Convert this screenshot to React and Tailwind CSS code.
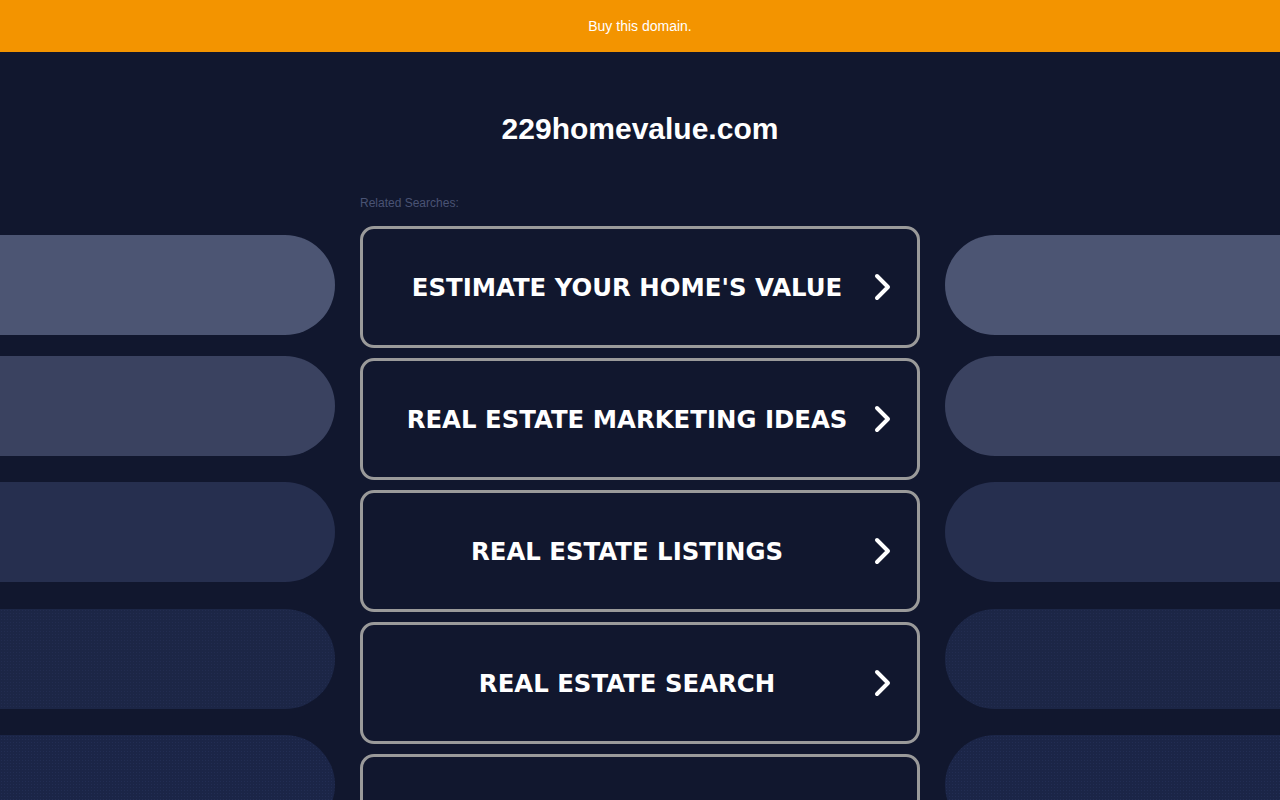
import React from "react";

const searches = ["Estimate Your Home's Value", "Real Estate Marketing Ideas", "Real Estate Listings", "Real Estate Search", ""];

// side decoration pills, top to bottom
const pills = [
    { cls: "mt-[39px] bg-[#4c5573]" },
    { cls: "mt-[21px] bg-[#3a4260]" },
    { cls: "mt-[26px] bg-[#262f4f]" },
    { cls: "mt-[27px] bg-[#1c2646] bg-[radial-gradient(#222c50_1px,transparent_1px)] bg-[length:3px_3px]" },
    { cls: "mt-[26px] bg-[#1b2547] bg-[radial-gradient(#222d53_1px,transparent_1px)] bg-[length:3px_3px]" },
];

function Chevron() {
    return (
        <svg width="18" height="28" viewBox="0 0 18 28" fill="none" className="shrink-0">
            <polyline points="3,3 14,14 3,25" stroke="white" strokeWidth="4" strokeLinecap="round" strokeLinejoin="round" />
        </svg>
    );
}

function SideColumn({ side }) {
    return (
        <div className="w-[335px] shrink-0 flex flex-col">
            {pills.map((p, i) => (
                <div key={i} className={`h-[100px] ${p.cls} ${side === "left" ? "rounded-r-full" : "rounded-l-full"}`}></div>
            ))}
        </div>
    );
}

export default function App() {
    return (
        <div className="w-[1280px] h-[800px] overflow-hidden bg-[#11172e] font-['Liberation_Sans',Arial,sans-serif]">
            <div className="h-[52px] bg-[#f39400] flex items-center justify-center">
                <span className="text-white text-[14px]">Buy this domain.</span>
            </div>

            <h1 className="pt-[59px] text-center text-white font-bold text-[30px] leading-[36px]">229homevalue.com</h1>

            <div className="flex gap-[25px] mt-[49px]">
                <SideColumn side="left" />

                <div className="w-[560px] shrink-0">
                    <p className="text-[12px] leading-[14px] text-[#4a5374]">Related Searches:</p>
                    <div className="flex flex-col gap-[10px] mt-[16px]">
                        {searches.map((s, i) => (
                            <div key={i} className="h-[122px] border-[3px] border-[#9a9a9a] rounded-[14px] flex items-center pl-[22px] pr-[25px]">
                                <span className="flex-1 pt-[3px] text-center text-white uppercase font-bold text-[24.4px] font-['DejaVu_Sans',Verdana,sans-serif]">{s}</span>
                                {s && (
                                    <span className="ml-[5px]">
                                        <Chevron />
                                    </span>
                                )}
                            </div>
                        ))}
                    </div>
                </div>

                <SideColumn side="right" />
            </div>
        </div>
    );
}
